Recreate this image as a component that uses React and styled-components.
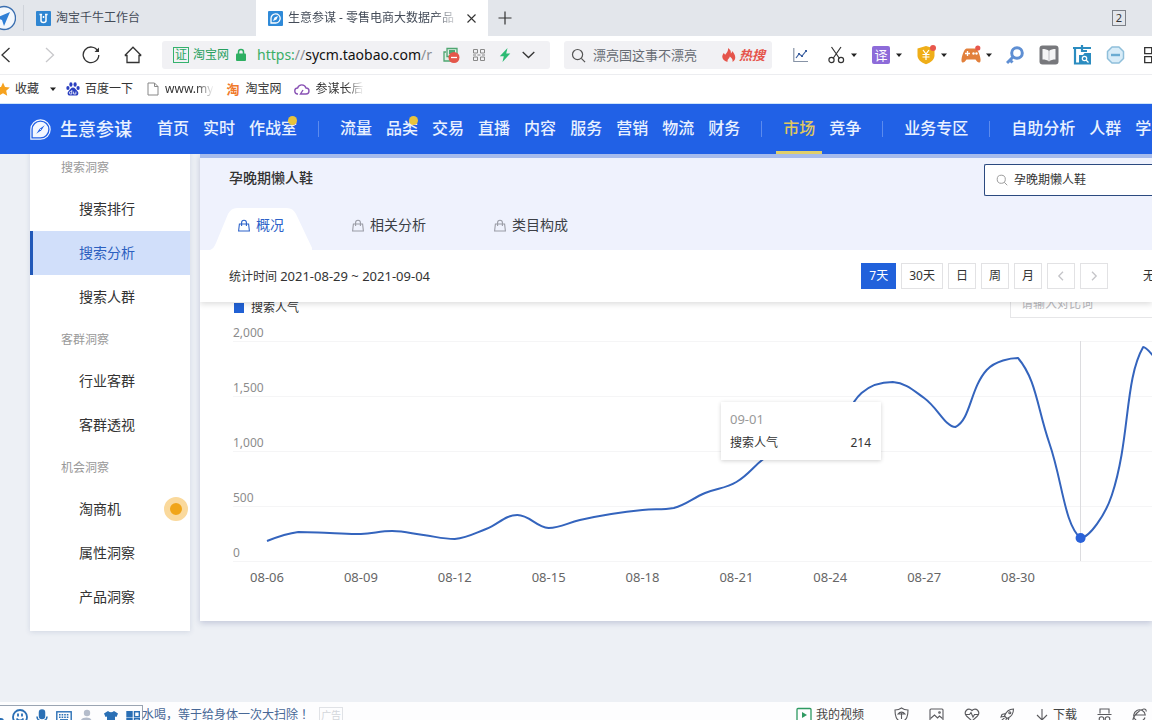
import React from "react";
import styled, { createGlobalStyle, css } from "styled-components";

const GlobalStyle = createGlobalStyle`
  * { box-sizing: border-box; }
  html, body { margin: 0; }
  body, button, input {
    font-family: "Noto Sans", "Noto Sans CJK SC", sans-serif;
    font-size: 12px;
    line-height: 20px;
    color: #333;
  }
  body { overflow: hidden; }
  button { padding: 0; border: 0; background: none; cursor: pointer; }
  a { color: inherit; text-decoration: none; }
  svg { display: block; flex: none; }
`;

const Page = styled.div`
  min-height: 100vh;
  display: flex;
  flex-direction: column;
  overflow: hidden;
  background: #edf0f5;
  white-space: nowrap;
`;

/* ---------- browser tabs ---------- */

const TabStrip = styled.div`
  display: flex;
  align-items: center;
  height: 36px;
  background: #e3e6eb;
`;

const Launcher = styled.button`
  width: 24px;
  height: 26px;
  border-right: 1px solid #cfd3da;
`;

const BrowserTab = styled.div`
  display: flex;
  align-items: center;
  width: 232px;
  height: 36px;
  padding: 0 10px 0 12px;
  gap: 5px;
  background: ${(p) => (p.$active ? "#fff" : "transparent")};
`;

const TabTitle = styled.span`
  flex: 1;
  overflow: hidden;
  color: #444c58;
  ${(p) => p.$fade && css`mask-image: linear-gradient(90deg, #000 84%, transparent 102%);`}
`;

const IconButton = styled.button`
  display: flex;
  align-items: center;
  justify-content: center;
  width: ${(p) => p.$w || 20}px;
  height: 24px;
`;

const WindowCount = styled.button`
  width: 14px;
  height: 16px;
  margin: 0 26px 0 auto;
  border: 1px solid #7d8188;
  font-size: 11px;
  line-height: 14px;
`;

/* ---------- address row ---------- */

const AddressRow = styled.div`
  display: flex;
  align-items: center;
  height: 39px;
  background: #fff;
  border-bottom: 1px solid #ecedf0;
`;

const HistoryButtons = styled.div`
  display: flex;
  flex: none;
  margin: 0 8px 0 -14px;
`;

const Field = styled.div`
  display: flex;
  flex: none;
  align-items: center;
  width: ${(p) => p.$w}px;
  height: 28px;
  padding: 0 ${(p) => p.$pad}px;
  border-radius: 3px;
  background: #f1f1f4;
`;

const SearchField = styled(Field)`
  margin-left: 14px;
`;

const CertBadge = styled.span`
  width: 16px;
  height: 16px;
  margin-right: 4px;
  border: 1px solid #35b26e;
  color: #27a862;
  line-height: 14px;
  text-align: center;
`;

const SiteName = styled.span`
  margin-right: 6px;
  color: #27a05f;
`;

const Url = styled.span`
  flex: 1;
  margin-left: 10px;
  overflow: hidden;
  font-size: 14px;
  color: #8a8d92;
  b { font-weight: 400; color: #111; }
  i { font-style: normal; color: #3bae67; }
`;

const QueryInput = styled.input`
  flex: 1;
  min-width: 0;
  padding: 0;
  margin-left: 7px;
  border: 0;
  outline: 0;
  background: none;
  font-size: 13px;
  color: #666b73;
`;

const HotSearch = styled.a`
  display: flex;
  align-items: center;
  gap: 1px;
  color: #e5544b;
  font-size: 13px;
  font-weight: 700;
  font-style: italic;
`;

const Tools = styled.div`
  display: flex;
  align-items: center;
  gap: 13px;
  margin-left: 21px;
`;

const Tool = styled.button`
  display: flex;
  flex: none;
  align-items: center;
  gap: 4px;
`;

/* ---------- bookmarks ---------- */

const Bookmarks = styled.nav`
  display: flex;
  align-items: center;
  height: 28px;
  margin-left: -4px;
`;

const BookmarkBar = styled.div`
  background: #fff;
  border-bottom: 1px solid #cfe5fa;
`;

const Bookmark = styled.a`
  display: flex;
  align-items: center;
  gap: 5px;
  margin-right: ${(p) => (p.$tight ? 0 : 13)}px;
  span {
    ${(p) => p.$fade && css`mask-image: linear-gradient(90deg, #000 65%, transparent 102%);`}
  }
`;

/* ---------- site header ---------- */

const SiteHeader = styled.header`
  position: relative;
  z-index: 2;
  display: flex;
  align-items: center;
  height: 50px;
  padding-left: 30px;
  background: #2161e6;
  color: #e9f1ff;
`;

const Brand = styled.a`
  display: flex;
  align-items: center;
  gap: 9px;
  margin-right: 18px;
  font-size: 18px;
  font-weight: 500;
`;

const NavLink = styled.a`
  position: relative;
  flex: none;
  height: 50px;
  padding: 0 7px;
  font-size: 16px;
  font-weight: 500;
  line-height: 48px;
  ${(p) => p.$active && css`
    color: #e0c860;
    border-bottom: 3px solid #e0cf6a;
  `}
`;

const NewDot = styled.span`
  position: absolute;
  top: 12px;
  right: 7px;
  width: 9px;
  height: 9px;
  border-radius: 50%;
  background: #e8c33c;
`;

const NavDivider = styled.span`
  flex: none;
  width: 1px;
  height: 16px;
  margin: 0 14px;
  background: #5c8bee;
`;

/* ---------- content ---------- */

const Content = styled.div`
  display: flex;
  flex: 1;
  align-items: flex-start;
  gap: 10px;
  padding: 0 0 70px 30px;
`;

const Sidebar = styled.nav`
  flex: none;
  width: 160px;
  margin-top: -7px;
  padding-bottom: 12px;
  background: #fff;
  box-shadow: 0 1px 5px rgba(60, 80, 130, 0.16);
`;

const GroupTitle = styled.h3`
  margin: 0;
  padding: 2px 0 0 31px;
  font-size: 12px;
  font-weight: 400;
  line-height: 38px;
  color: #999;
`;

const SideLink = styled.a`
  display: flex;
  align-items: center;
  justify-content: space-between;
  height: 44px;
  padding: 0 2px 0 46px;
  border-left: 3px solid ${(p) => (p.$active ? "#2158b8" : "transparent")};
  background: ${(p) => (p.$active ? "#d1dffa" : "transparent")};
  color: ${(p) => (p.$active ? "#2c5fc0" : "#333")};
  font-size: 14px;
`;

const Pulse = styled.span`
  width: 24px;
  height: 24px;
  border: 6px solid #fad99c;
  border-radius: 50%;
  background: #f0a519;
`;

const Panel = styled.main`
  flex: 1;
  min-width: 0;
  border-top: 4px solid #a6bbec;
  background: #fff;
  box-shadow: 0 2px 6px rgba(60, 70, 130, 0.25);
`;

const PanelHead = styled.div`
  display: flex;
  flex-direction: column;
  justify-content: space-between;
  height: 92px;
  background: #eff2fd;
`;

const TitleRow = styled.div`
  display: flex;
  align-items: center;
  justify-content: space-between;
  height: 44px;
  padding-left: 29px;
`;

const Title = styled.h2`
  margin: 0;
  padding-bottom: 4px;
  font-size: 14px;
  font-weight: 500;
`;

const KeywordBox = styled.label`
  display: flex;
  align-items: center;
  gap: 6px;
  width: 168px;
  height: 32px;
  padding-left: 11px;
  border: 1px solid #2b4a80;
  border-right: 0;
  border-radius: 2px 0 0 2px;
  background: #fff;
  input {
    flex: 1;
    min-width: 0;
    padding: 0;
    border: 0;
    outline: 0;
  }
`;

const Tabs = styled.div`
  display: flex;
  gap: 12px;
  padding-left: 10px;
`;

const Tab = styled.button`
  display: flex;
  align-items: center;
  gap: 6px;
  height: 42px;
  padding: 0 28px 8px;
  font-size: 14px;
  color: ${(p) => (p.$active ? "#2c62c9" : "#3c3f46")};
  ${(p) => p.$active && css`
    background: #fff;
    clip-path: path("M0 42 C3 41 4 39 6 35 L18 6 Q21 0 27 0 H77 Q83 0 86 6 L103 42 Z");
  `}
  svg { color: ${(p) => (p.$active ? "#2c62c9" : "#9a9ca6")}; }
`;

const FilterBar = styled.div`
  position: relative;
  z-index: 1;
  display: flex;
  align-items: center;
  gap: 5px;
  height: 52px;
  padding-left: 29px;
  background: #fff;
  box-shadow: 0 2px 6px rgba(0, 0, 0, 0.14);
  clip-path: inset(0 0 -10px 0);
`;

const Period = styled.div`
  margin-right: auto;
  time { font-size: 13px; }
`;

const RangeButton = styled.button`
  display: flex;
  flex: none;
  align-items: center;
  justify-content: center;
  min-width: 28px;
  height: 26px;
  padding: 0 7px;
  border: 1px solid ${(p) => (p.$active ? "#2161db" : "#e2e2e4")};
  background: ${(p) => (p.$active ? "#2161db" : "#fff")};
  color: ${(p) => (p.$active ? "#fff" : "#333")};
`;

const Terminal = styled.span`
  flex: none;
  width: 9px;
  margin-left: 30px;
`;

const ChartHead = styled.div`
  display: flex;
  align-items: flex-end;
  justify-content: space-between;
  height: 30px;
  margin-top: -14px;
  padding-left: 34px;
`;

const Legend = styled.span`
  display: flex;
  align-items: center;
  gap: 7px;
  &::before {
    content: "";
    width: 10px;
    height: 10px;
    background: #2161d4;
  }
`;

const CompareInput = styled.input`
  width: 142px;
  height: 30px;
  padding: 0 0 0 10px;
  border: 1px solid #e6e6e8;
  border-right: 0;
  outline: 0;
  &::placeholder { color: #b8b8bc; opacity: 1; }
`;

const ChartArea = styled.div`
  position: relative;
  height: 303px;
  overflow: hidden;
  svg { width: 100%; height: 303px; }
`;

const Tooltip = styled.div`
  position: absolute;
  left: 521px;
  top: 84px;
  width: 160px;
  padding: 5px 10px 5px 9px;
  background: #fff;
  box-shadow: 0 1px 4px rgba(0, 0, 0, 0.18);
  line-height: 24px;
`;

const TipDate = styled.div`
  font-size: 13px;
  color: #999;
`;

const TipRow = styled.div`
  display: flex;
  justify-content: space-between;
`;

/* ---------- status bar ---------- */

const StatusBar = styled.footer`
  height: 18px;
  overflow: hidden;
  background: #fdfdfe;
`;

const StatusRow = styled.div`
  display: flex;
  align-items: center;
  height: 26px;
`;

const ImeBar = styled.div`
  display: flex;
  flex: none;
  align-items: center;
  align-self: flex-end;
  gap: 8px;
  width: 143px;
  height: 23px;
  margin-right: -1px;
  border-top: 1px solid #9aa4b2;
  border-right: 1px solid #9aa4b2;
  color: #2a6fb5;
  svg:first-child { margin-left: -12px; }
`;

const Headline = styled.a`
  color: #476796;
`;

const AdTag = styled.span`
  margin-left: 6px;
  padding: 0 1px;
  border: 1px solid #e0e2e6;
  color: #d3d6db;
  font-size: 10px;
  line-height: 14px;
`;

const StatusTools = styled.div`
  display: flex;
  align-items: center;
  gap: 20px;
  margin-left: auto;
  padding-right: 5px;
`;

const StatusButton = styled.button`
  display: flex;
  align-items: center;
  gap: 4px;
  color: #444;
`;

const StatusGroup = styled.div`
  display: flex;
  align-items: center;
  gap: 20px;
  padding-left: 10px;
  svg { color: #5a5a5e; stroke-width: 1.1; }
`;

/* ---------- icons ---------- */

const Svg = ({ w = 16, h, vb, children, sw = 1.3, ...rest }) => (
  <svg width={w} height={h || w} viewBox={vb || `0 0 ${w} ${h || w}`} fill="none"
    stroke="currentColor" strokeWidth={sw} aria-hidden="true" {...rest}>{children}</svg>
);

const Caret = () => <Svg w={8} stroke="none"><path d="M1 2.5h6L4 6z" fill="#222" /></Svg>;

const Glass = ({ w = 16, color = "#555" }) => (
  <Svg w={w} vb="0 0 16 16" color={color}><circle cx="7" cy="7" r="5.4" /><path d="M11 11l4 4" /></Svg>
);

const Bag = () => (
  <Svg w={12} h={13} sw={1.1}><path d="M1.4 5h9.2l.8 7H.6zM3.6 7V3.6a2.4 2.4 0 0 1 4.8 0V7" /></Svg>
);

const Leaf = ({ w, fill, needle }) => (
  <Svg w={w} vb="0 0 20 20" stroke="none">
    <path d="M.8 19.200V10a9.200 9.200 0 1 1 9.200 9.200z" stroke={fill} strokeWidth="1.1" />
    <path d="M2.600 17.400V10a7.400 7.400 0 1 1 7.400 7.400z" fill={fill} />
    <path d="M14 6l-3.200 4.800L6 14l3.200-4.800z" fill={needle} />
    <path d="M9.200 9.200l1.600 1.600" stroke={fill} strokeWidth=".8" />
  </Svg>
);

const Paw = () => (
  <Svg w={14} stroke="none">
    <g fill="#2a3fc0">
      <ellipse cx="1.9" cy="6" rx="1.6" ry="2.1" /><ellipse cx="4.9" cy="2.5" rx="1.6" ry="2.2" />
      <ellipse cx="9.1" cy="2.5" rx="1.6" ry="2.2" /><ellipse cx="12.1" cy="6" rx="1.6" ry="2.1" />
      <path d="M7 5.6c2 0 2.7 2 4.3 3.4 2 2 1 4.6-1.2 4.6H3.9C1.7 13.6.7 11 2.7 9 4.3 7.6 5 5.6 7 5.6z" />
    </g>
    <path d="M5.8 8v4H4.6a1.2 1.2 0 0 1 0-2.4h1.200M7.6 9.600v2.400h2.300V9.600" stroke="#fff" strokeWidth=".8" />
  </Svg>
);

/* ---------- chart ---------- */

const STEP = 751 / 24;
const LEFT = 67;
const LEVELS = [541, 532, 533, 534, 531, 535, 539, 529, 515, 528, 520, 514, 510, 508, 493, 482,
  456, 442, 438, 393, 382, 398, 427, 370, 358, 443, 538, 495, 347, 385];
const POINTS = LEVELS.map((y, i) => [LEFT + i * STEP, y - 318]);

/* Catmull-Rom style spline whose handles stay between the two points of their segment. */
function smoothPath(pts, tension = 0.4) {
  const between = (v, a, b) => Math.min(Math.max(a, b), Math.max(Math.min(a, b), v));
  let d = `M${pts[0]}`;
  let out = pts[0];
  for (let i = 1; i < pts.length; i++) {
    const prev = pts[i - 1];
    const p = pts[i];
    const next = pts[i + 1];
    let into = p;
    let nextOut = p;
    if (next) {
      const a = Math.hypot(p[0] - prev[0], p[1] - prev[1]);
      const b = Math.hypot(next[0] - p[0], next[1] - p[1]);
      const v = [0, 1].map((k) => ((next[k] - prev[k]) * tension) / (a + b));
      into = [0, 1].map((k) => between(p[k] - v[k] * a, p[k], prev[k]));
      nextOut = [0, 1].map((k) => between(p[k] + v[k] * b, p[k], next[k]));
    }
    d += `C${out} ${into} ${p}`;
    out = nextOut;
  }
  return d;
}

const Y_TICKS = ["2,000", "1,500", "1,000", "500", "0"];
const X_TICKS = ["08-06", "08-09", "08-12", "08-15", "08-18", "08-21", "08-24", "08-27", "08-30"];

function TrendChart() {
  const [hx, hy] = POINTS[26];
  return (
    <ChartArea>
      <svg role="img" aria-label="搜索人气">
        {Y_TICKS.map((t, i) => (
          <g key={t}>
            <line x1="33" x2="100%" y1={23.5 + i * 55} y2={23.5 + i * 55} stroke="#f5f5f6" />
            <text x="33" y={19 + i * 55} fontSize="12" fill="#8c8c8c">{t}</text>
          </g>
        ))}
        {X_TICKS.map((t, i) => (
          <text key={t} x={LEFT + i * 3 * STEP} y="264" fontSize="13" textAnchor="middle" fill="#666">{t}</text>
        ))}
        <line x1="880.5" x2="880.5" y1="23" y2="243" stroke="#dcdcdf" />
        <path d={smoothPath(POINTS)} fill="none" stroke="#3464bd" strokeWidth="2" strokeLinejoin="round" />
        <circle cx={hx} cy={hy} r="5" fill="#2a62d9" />
      </svg>
      <Tooltip role="tooltip">
        <TipDate>09-01</TipDate>
        <TipRow><span>搜索人气</span><span>214</span></TipRow>
      </Tooltip>
    </ChartArea>
  );
}

/* ---------- data ---------- */

const NAV = [
  ["首页", "实时", "作战室*"],
  ["流量", "品类*", "交易", "直播", "内容", "服务", "营销", "物流", "财务"],
  ["市场", "竞争"],
  ["业务专区"],
  ["自助分析", "人群", "学"],
];

const SIDE = [
  ["搜索洞察", ["搜索排行", "搜索分析", "搜索人群"]],
  ["客群洞察", ["行业客群", "客群透视"]],
  ["机会洞察", ["淘商机", "属性洞察", "产品洞察"]],
];

function BrowserChrome() {
  return (
    <>
      <TabStrip>
        <Launcher aria-label="浏览器">
          <Svg w={16} h={26} sw={1.4} color="#3b6fb0">
            <circle cx="4" cy="13" r="11.5" fill="#f4f8fd" />
            <path d="M10 7L-4 13l6 2 2 6z" fill="#2f7fd6" stroke="none" />
          </Svg>
        </Launcher>
        <BrowserTab>
          <Svg w={15} stroke="none">
            <rect width="15" height="15" rx="1" fill="#2f86d2" />
            <path d="M3.5 3.5h2.600M9 3.5h2.600M5 4v5.500q0 2 2.500 2t2.500-2V4M7.500 5v2" stroke="#fff" strokeWidth="1.5" />
          </Svg>
          <TabTitle>淘宝千牛工作台</TabTitle>
        </BrowserTab>
        <BrowserTab $active>
          <Svg w={15} stroke="none">
            <rect width="15" height="15" rx="1" fill="#2f8ad8" />
            <path d="M3 12V7.5A4.600 4.600 0 1 1 7.600 12z" stroke="#fff" strokeWidth="1.3" />
            <path d="M10 5L8.500 8.500 5 10l1.500-3.500z" fill="#fff" />
          </Svg>
          <TabTitle $fade>生意参谋 - 零售电商大数据产品</TabTitle>
          <IconButton $w={14} aria-label="关闭标签页"><Svg w={9} sw={1.1}><path d="M.5.5l8 8M8.500.5l-8 8" /></Svg></IconButton>
        </BrowserTab>
        <IconButton $w={34} aria-label="新标签页"><Svg w={14} sw={1.2}><path d="M7 .5v13M.5 7h13" /></Svg></IconButton>
        <WindowCount>2</WindowCount>
      </TabStrip>

      <AddressRow>
        <HistoryButtons>
          <IconButton $w={42} aria-label="后退"><Svg w={16}><path d="M10.500 1L3 8l7.500 7" /></Svg></IconButton>
          <IconButton $w={42} aria-label="前进"><Svg w={16} color="#c8c8cb"><path d="M5 1l7.500 7L5 15" /></Svg></IconButton>
          <IconButton $w={42} aria-label="刷新">
            <Svg w={18}><path d="M15.800 5A7.800 7.800 0 1 0 16.800 9" /><path d="M17 1.500V6h-4.500z" fill="currentColor" stroke="none" /></Svg>
          </IconButton>
          <IconButton $w={42} aria-label="主页">
            <Svg w={18}><path d="M.8 9.500L9 1.200l8.200 8.300M.8 9.500H3v7h12v-7h2.200" /></Svg>
          </IconButton>
        </HistoryButtons>

        <Field $w={388} $pad={11}>
          <CertBadge>证</CertBadge>
          <SiteName>淘宝网</SiteName>
          <Svg w={12} h={14} stroke="none">
            <rect x="1" y="5.5" width="10" height="7.5" rx="1" fill="#2eaf62" />
            <path d="M3.500 6V4a2.500 2.500 0 0 1 5 0v2" stroke="#2eaf62" strokeWidth="1.5" />
          </Svg>
          <Url><i>https:</i>//<b>sycm.taobao.com</b>/r</Url>
          <IconButton $w={28} aria-label="广告过滤">
            <Svg w={17}>
              <path d="M3 5H1v9h7M4 1.500h10v8H4z" stroke="#4fa671" fill="#dff0e5" />
              <path d="M6 3h6v4H6z" fill="#4fa671" stroke="none" />
              <circle cx="11" cy="10.5" r="5.5" fill="#e4564a" stroke="none" /><path d="M8 10.500h6" stroke="#fff" />
            </Svg>
          </IconButton>
          <IconButton $w={28} aria-label="二维码">
            <Svg w={12} sw={1} color="#888">
              <path d="M.5.5h4v3.500h-4zM7.500.5h4v3.500h-4zM.5 8h4v3.500h-4zM7.500 8h4v3.500h-4zM0 6h3M4.500 6h3M9 6h3" />
            </Svg>
          </IconButton>
          <IconButton $w={24} aria-label="极速模式">
            <Svg w={12} h={14} stroke="none"><path d="M8.500 0L.8 8.200h4L3.500 14l7.800-8.500H7.200z" fill="#2dbb74" /></Svg>
          </IconButton>
          <IconButton $w={22} aria-label="展开"><Svg w={13} h={8}><path d="M.7 1l5.800 5.500L12.300 1" /></Svg></IconButton>
        </Field>

        <SearchField $w={208} $pad={7}>
          <Glass w={15} />
          <QueryInput aria-label="搜索" defaultValue="漂亮国这事不漂亮" />
          <HotSearch href="#hot">
            <Svg w={16} h={14} stroke="none"><path d="M6 0c3 2 3 4 2.800 5.500 1-.6 1.200-1.500 1.200-2.500 4 4 4.500 8.500.5 11 .5-2.500-.7-4-2.700-5.500C7.600 10.500 5 11 5.500 14-.5 12-.8 8 2 4.800c.2 1 .5 1.500 1.200 2C4.500 4.800 6.500 3 6 0z" fill="#e5544b" /></Svg>
            <span>热搜</span>
          </HotSearch>
        </SearchField>

        <Tools>
          <Tool aria-label="行情">
            <Svg w={20} sw={1.2}>
              <path d="M.8 3v13.500H15" stroke="#8793a6" />
              <path d="M3 13l3-4 3 2 4-5" stroke="#3a5fa0" />
              <path d="M5 8h2v2H5zM8 10h2v2H8zM12 5h2v2h-2z" fill="#3a5fa0" stroke="none" />
            </Svg>
          </Tool>
          <Tool aria-label="截图">
            <Svg w={20} sw={1.2}><path d="M5.500 2l8 11.500M15 2L7 13.500" /><circle cx="5.5" cy="15" r="2.6" /><circle cx="15" cy="15" r="2.6" /></Svg>
            <Caret />
          </Tool>
          <Tool aria-label="翻译">
            <Svg w={20} stroke="none">
              <rect x="1" y="1" width="18" height="18" rx="2" fill="#8d6bd9" />
              <text x="10" y="15" fontSize="13" textAnchor="middle" fill="#fff">译</text>
            </Svg>
            <Caret />
          </Tool>
          <Tool aria-label="网购先赔">
            <Svg w={20} stroke="none">
              <path d="M10 1l8.500 2.500v7c0 4-3.500 7-8.500 8.800-5-1.800-8.500-4.800-8.500-8.800v-7z" fill="#efae18" />
              <path d="M7 5l3 4 3-4M6.500 9.500h7M6.500 12h7M10 9v6" stroke="#fff" strokeWidth="1.2" />
              <circle cx="17" cy="3" r="3" fill="#e8574c" />
            </Svg>
            <Caret />
          </Tool>
          <Tool aria-label="游戏">
            <Svg w={20} stroke="none">
              <path d="M5.500 3.500h9c2.500 0 5.500 9.500 5 12.500-.5 2.500-3 2-5-1.500h-9C3.500 18 1 18.500.5 16 0 13 3 3.500 5.500 3.500z" fill="#e2803c" />
              <path d="M6.500 6v5M4 8.500h5" stroke="#fff" strokeWidth="1.3" />
              <circle cx="12.5" cy="8.5" r="1.2" fill="#fff" /><circle cx="15.500" cy="8.5" r="1.2" fill="#fff" />
              <circle cx="16.8" cy="3" r="2.6" fill="#e8574c" />
            </Svg>
            <Caret />
          </Tool>
          <Tool aria-label="密码">
            <Svg w={20} sw={3} color="#5f8fd3"><circle cx="11" cy="8" r="5.3" /><path d="M7.500 11.500L1 18M3.500 14.500l3 3" /></Svg>
          </Tool>
          <Tool aria-label="阅读">
            <Svg w={20} stroke="none">
              <rect x=".5" y=".5" width="19" height="19" rx="3" fill="#77787c" />
              <path d="M3.500 4c2.500 0 5 .6 6.500 2 1.500-1.400 4-2 6.500-2v10.500c-2.500 0-5 .6-6.500 2-1.500-1.400-4-2-6.500-2z" fill="#f4f4f5" />
              <path d="M10 6v10" stroke="#c9c9cc" />
            </Svg>
          </Tool>
          <Tool aria-label="剪贴板搜索">
            <Svg w={20} sw={2.2} color="#2b8cc0">
              <path d="M1 3h18M3 3v15.500h4M10 0v6h5" />
              <path d="M7 10h4l1.500-2H19v11.500H7z" fill="currentColor" stroke="none" />
              <circle cx="12.5" cy="13.5" r="2.2" stroke="#fff" strokeWidth="1.2" /><path d="M14 15l2.500 2.500" stroke="#fff" strokeWidth="1.2" />
            </Svg>
          </Tool>
          <Tool aria-label="停用">
            <Svg w={20}><path d="M7 2h7l4.500 4.500v7L14 18H7l-4.500-4.500v-7z" fill="#d8ecf8" stroke="#8fbfda" strokeWidth="1.5" strokeLinejoin="round" /><path d="M6 10h9" stroke="#6bacd2" strokeWidth="2.4" /></Svg>
          </Tool>
          <Tool aria-label="更多扩展">
            <Svg w={20}><path d="M6.700 2.700h7v6h-7zM6.700 11.700h7v6h-7z" /></Svg>
          </Tool>
        </Tools>
      </AddressRow>

      <BookmarkBar>
        <Bookmarks aria-label="收藏栏">
          <Bookmark href="#fav" $tight>
            <Svg w={14} stroke="none"><path d="M7 .5l2 4.500 4.800.5-3.600 3.300 1 4.900L7 11.200l-4.200 2.500 1-4.900L.2 5.500 5 5z" fill="#f6a21e" /></Svg>
            <span>收藏</span>
          </Bookmark>
          <IconButton $w={27} aria-label="收藏菜单"><Caret /></IconButton>
          <Bookmark href="#baidu"><Paw /><span>百度一下</span></Bookmark>
          <Bookmark href="#my" $fade>
            <Svg w={14} sw={1} color="#888"><path d="M2 1h6.500L12 4.500V13H2zM8.500 1v3.500H12" /></Svg>
            <span>www.my</span>
          </Bookmark>
          <Bookmark href="#taobao">
            <Svg w={14} stroke="none">
              <text x="7" y="12" fontSize="13" fontWeight="700" textAnchor="middle" fill="#f07a2a">淘</text>
            </Svg>
            <span>淘宝网</span>
          </Bookmark>
          <Bookmark href="#sycm" $fade>
            <Svg w={16} h={14} sw={1.4} color="#8a53b5"><path d="M4 12a3 3 0 0 1-.4-6A4.400 4.400 0 0 1 12 6a3 3 0 0 1 0 6H6.500L9 8" /></Svg>
            <span>参谋长后</span>
          </Bookmark>
        </Bookmarks>
      </BookmarkBar>
    </>
  );
}

export default function App() {
  return (
    <Page>
      <GlobalStyle />
      <BrowserChrome />

      <SiteHeader>
        <Brand href="#home"><Leaf w={21} fill="#f2f7ff" needle="#2161e6" />生意参谋</Brand>
        {NAV.map((group, g) => (
          <React.Fragment key={g}>
            {g > 0 && <NavDivider />}
            {group.map((name) => {
              const label = name.replace("*", "");
              return (
                <NavLink key={label} href={`#${label}`} $active={label === "市场"}>
                  {label}
                  {name !== label && <NewDot />}
                </NavLink>
              );
            })}
          </React.Fragment>
        ))}
      </SiteHeader>

      <Content>
        <Sidebar>
          {SIDE.map(([title, links]) => (
            <React.Fragment key={title}>
              <GroupTitle>{title}</GroupTitle>
              {links.map((l) => (
                <SideLink key={l} href={`#${l}`} $active={l === "搜索分析"}>
                  {l}
                  {l === "淘商机" && <Pulse />}
                </SideLink>
              ))}
            </React.Fragment>
          ))}
        </Sidebar>

        <Panel>
          <PanelHead>
            <TitleRow>
              <Title>孕晚期懒人鞋</Title>
              <KeywordBox>
                <Glass w={12} color="#999" />
                <input aria-label="搜索词" defaultValue="孕晚期懒人鞋" />
              </KeywordBox>
            </TitleRow>
            <Tabs role="tablist">
              {["概况", "相关分析", "类目构成"].map((t, i) => (
                <Tab key={t} role="tab" aria-selected={i === 0} $active={i === 0}><Bag />{t}</Tab>
              ))}
            </Tabs>
          </PanelHead>

          <FilterBar>
            <Period>统计时间 <time>2021-08-29 ~ 2021-09-04</time></Period>
            {["7天", "30天", "日", "周", "月"].map((t, i) => (
              <RangeButton key={t} $active={i === 0}>{t}</RangeButton>
            ))}
            <RangeButton aria-label="上一段"><Svg w={8} h={10} color="#c4c4c8"><path d="M6 .8L1.800 5 6 9.200" /></Svg></RangeButton>
            <RangeButton aria-label="下一段"><Svg w={8} h={10} color="#c4c4c8"><path d="M2 .8L6.200 5 2 9.200" /></Svg></RangeButton>
            <Terminal>无</Terminal>
          </FilterBar>

          <ChartHead>
            <Legend>搜索人气</Legend>
            <CompareInput aria-label="对比词" placeholder="请输入对比词" />
          </ChartHead>
          <TrendChart />
        </Panel>
      </Content>

      <StatusBar>
        <StatusRow>
          <ImeBar>
            <Svg w={16} stroke="none"><circle cx="13" cy="12" r="3" fill="currentColor" /></Svg>
            <Svg w={16} sw={1.8}><circle cx="8" cy="8" r="7" /><path d="M4.500 9.500q3.500 4 7 0M6 4.500v3M10 4.500v3" /></Svg>
            <Svg w={12} h={16} sw={1.5}><rect x="3.5" y="1" width="5" height="8.5" rx="2.5" fill="currentColor" /><path d="M1 7.500c0 6 10 6 10 0M6 12v3" /></Svg>
            <Svg w={16} h={12} sw={1.4}><rect x=".8" y=".8" width="14.4" height="10.4" /><path d="M3 3.800h10M3 6.200h10" strokeDasharray="1.6 1" /><path d="M4 8.800h8" /></Svg>
            <Svg w={16} stroke="none" color="#b4bccb"><circle cx="7" cy="4" r="3.2" fill="currentColor" /><path d="M0 14c0-7 12-7 12-1h4v3H0z" fill="currentColor" /></Svg>
            <Svg w={14} stroke="none"><path d="M4 1q3 2.500 6 0l4 2.500-1.500 3.500-1.500-.6V14H3V6.400L1.500 7 0 3.500z" fill="currentColor" /></Svg>
            <Svg w={14} sw={1.4}><path d="M1 1.700h5v5H1zM1 8.700h5v5H1z" fill="currentColor" /><path d="M8.500 1.700h4.800v5H8.500zM8.500 8.700h4.800v5H8.500z" /></Svg>
          </ImeBar>
          <Headline href="#news">水喝，等于给身体一次大扫除 ！</Headline>
          <AdTag>广告</AdTag>
          <StatusTools>
            <StatusButton>
              <Svg w={16} color="#2f9a62"><rect x="1" y="1.5" width="14" height="13" rx="1" /><path d="M6 5l5 3-5 3z" fill="currentColor" stroke="none" /></Svg>
              我的视频
            </StatusButton>
            <StatusGroup>
              <Tool aria-label="安全"><Svg w={15} h={16}><path d="M7.500 1C5.500 2.500 3 3 1 3c0 6 1 10 6.500 12C13 13 14 9 14 3c-2 0-4.500-.5-6.500-2zM4 7c2-2.500 5-2.500 7 0zM7.500 6v6" /></Svg></Tool>
              <Tool aria-label="图片"><Svg w={15} h={14}><rect x="1" y="1" width="13" height="12" rx="1" /><path d="M1.500 10.500L5.500 7l3 3 2-2 3 2.500" /><circle cx="10.5" cy="4.5" r=".8" /></Svg></Tool>
              <Tool aria-label="健康"><Svg w={16} h={14}><path d="M8 13L2.500 8C-1 4 4-1.500 8 2.500c4-4 9 1.500 5.500 5.500zM1.500 6.500h4l1.500-2 2 4.500 1.500-2.500h4" /></Svg></Tool>
              <Tool aria-label="加速"><Svg w={15} h={16}><path d="M13.500 2C9 2 6 5 4.500 9l2.500 2.500C11 10 13.500 7 13.500 2zM5.500 6.500L2 7.500 1 10l3.500-.8M9 10.500L8 14l-2.500 1 .8-3.500M1 14l3.500-3.200" /><circle cx="9.8" cy="5.8" r="1" /></Svg></Tool>
              <StatusButton>
                <Svg w={14}><path d="M7 1v11M2 7l5 5 5-5" /></Svg>
                下载
              </StatusButton>
              <Tool aria-label="隐身"><Svg w={15} h={16}><path d="M3 6.500V2h9v4.500M.5 7.500h14" /><circle cx="4.5" cy="12" r="2.3" /><circle cx="10.500" cy="12" r="2.3" /></Svg></Tool>
              <Tool aria-label="内核"><Svg w={15} h={16}><path d="M13 10.500A5.800 5.800 0 1 1 13.300 8H4M14 4.500C15 1 10 1 5 6s-5.500 10-1 8.500" /></Svg></Tool>
            </StatusGroup>
          </StatusTools>
        </StatusRow>
      </StatusBar>
    </Page>
  );
}
